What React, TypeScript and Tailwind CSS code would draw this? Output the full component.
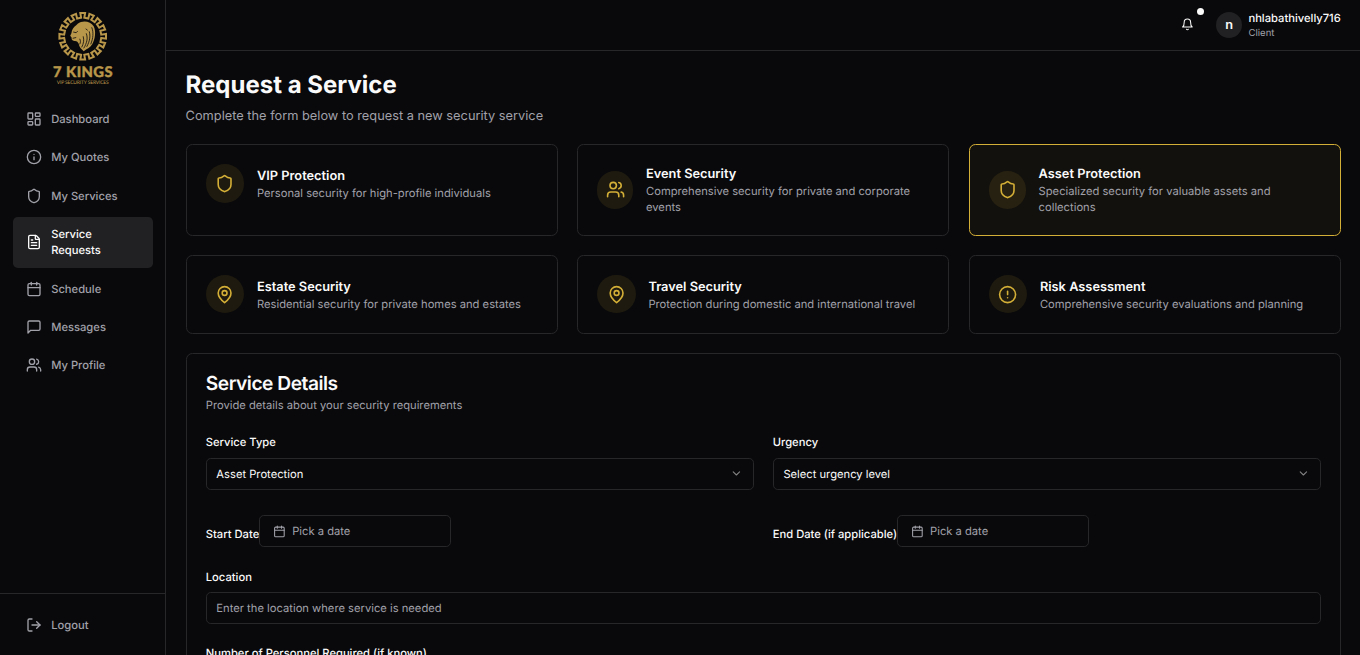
import type { ComponentType, ReactNode } from "react";
import {
  Calendar,
  ChevronDown,
  CircleAlert,
  FileText,
  Info,
  LayoutDashboard,
  LogOut,
  Shield,
  Users,
} from "lucide-react";

type IconProps = { className?: string };
type Icon = ComponentType<IconProps>;

function StrokeIcon({ className, children }: IconProps & { children: ReactNode }) {
  return (
    <svg
      viewBox="0 0 24 24"
      fill="none"
      stroke="currentColor"
      strokeWidth="2"
      strokeLinecap="round"
      strokeLinejoin="round"
      className={className}
    >
      {children}
    </svg>
  );
}

function Bell({ className }: IconProps) {
  return (
    <StrokeIcon className={className}>
      <path d="M6 8a6 6 0 0 1 12 0c0 7 3 9 3 9H3s3-2 3-9" />
      <path d="M10.300 21a1.940 1.940 0 0 0 3.400 0" />
    </StrokeIcon>
  );
}

function MessageSquare({ className }: IconProps) {
  return (
    <StrokeIcon className={className}>
      <path d="M21 15a2 2 0 0 1-2 2H7l-4 4V5a2 2 0 0 1 2-2h14a2 2 0 0 1 2 2z" />
    </StrokeIcon>
  );
}

function MapPin({ className }: IconProps) {
  return (
    <StrokeIcon className={className}>
      <path d="M20 10c0 6-8 12-8 12s-8-6-8-12a8 8 0 0 1 16 0Z" />
      <circle cx="12" cy="10" r="3" />
    </StrokeIcon>
  );
}

const navItems: { label: string; icon: Icon; active?: boolean }[] = [
  { label: "Dashboard", icon: LayoutDashboard },
  { label: "My Quotes", icon: Info },
  { label: "My Services", icon: Shield },
  { label: "Service Requests", icon: FileText, active: true },
  { label: "Schedule", icon: Calendar },
  { label: "Messages", icon: MessageSquare },
  { label: "My Profile", icon: Users },
];

const services: { title: string; text: string; icon: Icon; selected?: boolean }[] = [
  { title: "VIP Protection", text: "Personal security for high-profile individuals", icon: Shield },
  { title: "Event Security", text: "Comprehensive security for private and corporate events", icon: Users },
  { title: "Asset Protection", text: "Specialized security for valuable assets and collections", icon: Shield, selected: true },
  { title: "Estate Security", text: "Residential security for private homes and estates", icon: MapPin },
  { title: "Travel Security", text: "Protection during domestic and international travel", icon: MapPin },
  { title: "Risk Assessment", text: "Comprehensive security evaluations and planning", icon: CircleAlert },
];

// Closed battlement ring: each tooth steps between the inner and the outer radius.
function ringPath(teeth: number, inner: number, outer: number) {
  const step = (Math.PI * 2) / teeth;
  const point = (r: number, a: number) => `${(r * Math.sin(a)).toFixed(2)} ${(-r * Math.cos(a)).toFixed(2)}`;
  const parts: string[] = [];
  for (let i = 0; i < teeth; i++) {
    const a = i * step;
    parts.push(point(inner, a - step * 0.22), point(outer, a - step * 0.26), point(outer, a + step * 0.26), point(inner, a + step * 0.22));
  }
  return `M${parts.join(" L")} Z`;
}

function Logo() {
  return (
    <svg viewBox="0 0 74 84" className="h-[105px] w-[92.5px]" fill="#b8964a">
      <g transform="translate(36.7 30.3)">
        <path d={ringPath(16, 18.6, 23.4)} fill="none" stroke="#b8964a" strokeWidth="2" />
        <path d="M-5 -12.5 C0 -16.500 8 -15 11 -10 C13.500 -5 12.500 3 9.500 8 C7.500 11.500 4 12.500 1 15 C-1.500 12.500 -3.500 11 -4 7.500 C-5 5 -6.500 4.500 -8 4.600 C-10.500 4.800 -11.500 3 -11 1.500 L-12.500 -0.500 L-11.300 -3 C-11 -7 -8.500 -9.500 -6.500 -11 Z" />
        <path
          d="M-9.500 -4.300 L-6.500 -3.600 L-5 -5.200 M-10 2 L-6.500 1.200 M3 -7.500 L5 -6 M9 -9 C11 -4 10.500 2 8 8 M6.500 -5 C8 0 7 5 4 10.500 M3.500 -3 C5.500 2 4 7 1 12 M0.500 0 C1.500 4 1 7 -1 11 M-3 2.500 C-2 4.500 -2 6 -3 8"
          fill="none"
          stroke="#09090b"
          strokeWidth="0.8"
        />
      </g>
      <text
        x="36.800"
        y="71.300"
        textAnchor="middle"
        textLength="59.500"
        stroke="#b8964a"
        strokeWidth="0.4"
        className="font-[Lato,sans-serif] text-[14.7px] font-black"
      >
        7 KINGS
      </text>
      <text x="36.800" y="77.800" textAnchor="middle" textLength="52" className="font-[Lato,sans-serif] text-[5px]">
        VIP SECURITY SERVICES
      </text>
    </svg>
  );
}

function NavItem({ label, icon: Icon, active }: { label: string; icon: Icon; active?: boolean }) {
  return (
    <a
      className={
        active
          ? "flex items-center rounded-md bg-[#212123] px-4 py-3 text-sm font-medium text-[#fafafa]"
          : "flex items-center rounded-md px-4 py-3 text-sm font-medium text-[#a1a1aa]"
      }
    >
      <Icon className="mr-3 h-5 w-5 shrink-0" />
      <span>{label}</span>
    </a>
  );
}

function Sidebar() {
  return (
    <aside className="flex w-[208px] shrink-0 flex-col border-r border-[#27272a]">
      <div className="flex h-[110.85px] justify-center pt-[7.5px]">
        <Logo />
      </div>
      <nav className="flex flex-1 flex-col gap-1 p-4">
        {navItems.map((item) => (
          <NavItem key={item.label} {...item} />
        ))}
      </nav>
      <div className="border-t border-[#27272a] p-4">
        <NavItem label="Logout" icon={LogOut} />
      </div>
    </aside>
  );
}

function Header() {
  return (
    <header className="flex h-16 shrink-0 items-center justify-end border-b border-[#27272a] px-6">
      <div className="relative mr-4 mb-0.5 flex h-10 w-10 items-center justify-center">
        <Bell className="h-4 w-4" />
        <span className="absolute top-0 right-0 h-2 w-2 rounded-full bg-[#fafafa]" />
      </div>
      <div className="flex items-center gap-2">
        <div className="flex h-8 w-8 items-center justify-center rounded-full bg-[#212123] font-semibold">n</div>
        <div>
          <p className="mb-0.5 text-sm font-medium">nhlabathivelly716</p>
          <p className="text-xs text-[#a1a1aa]">Client</p>
        </div>
      </div>
    </header>
  );
}

function ServiceCard({ title, text, icon: Icon, selected }: (typeof services)[number]) {
  return (
    <div
      className={
        selected
          ? "rounded-lg border border-[#d4af37] bg-[#d4af37]/5"
          : "rounded-lg border border-[#27272a]"
      }
    >
      <div className="flex items-center gap-4 p-6">
        <div className="flex h-12 w-12 items-center justify-center rounded-full bg-[#d4af37]/10 text-[#d4af37]">
          <Icon className="h-6 w-6" />
        </div>
        <div>
          <h3 className="-mb-[1.4px] pt-[1.4px] font-semibold">{title}</h3>
          <p className="text-sm text-[#a1a1aa]">{text}</p>
        </div>
      </div>
    </div>
  );
}

function Label({ children, className = "" }: { children: ReactNode; className?: string }) {
  return <label className={`text-sm leading-none font-medium ${className}`}>{children}</label>;
}

function SelectField({ label, value }: { label: string; value: string }) {
  return (
    <div>
      <Label className="align-[-1.5px]">{label}</Label>
      <button className="mt-2 flex h-10 w-full items-center justify-between rounded-md border border-[#27272a] px-3 text-sm [text-rendering:geometricPrecision]">
        <span>{value}</span>
        <ChevronDown className="h-4 w-4 opacity-50" />
      </button>
    </div>
  );
}

function DateField({ label }: { label: string }) {
  return (
    <div>
      <Label>{label}</Label>
      <button className="mt-2 inline-flex h-10 w-[240px] items-center rounded-md border border-[#27272a] px-4 text-sm text-[#a1a1aa] [text-rendering:geometricPrecision]">
        <Calendar className="mr-2 h-4 w-4" />
        Pick a date
      </button>
    </div>
  );
}

function TextField({ label, labelClass, placeholder }: { label: string; labelClass: string; placeholder?: string }) {
  return (
    <div>
      <Label className={labelClass}>{label}</Label>
      <input
        placeholder={placeholder}
        className="mt-2 flex h-10 w-full rounded-md border border-[#27272a] px-3 text-sm [text-rendering:geometricPrecision] placeholder:text-[#a1a1aa]"
      />
    </div>
  );
}

export default function App() {
  return (
    <div className="flex h-[818.75px] w-[1700px] overflow-hidden bg-[#09090b] font-[Inter,sans-serif] text-base text-[#fafafa] [text-rendering:geometricPrecision] [zoom:0.8]">
      <Sidebar />
      <div className="flex min-w-0 flex-1 flex-col">
        <Header />
        <main className="min-h-0 flex-1 overflow-hidden p-6">
          <h1 className="pt-[1.25px] text-3xl font-bold">Request a Service</h1>
          <p className="mt-2 text-[#a1a1aa]">Complete the form below to request a new security service</p>
          <div className="mt-[22.87px] grid grid-cols-3 gap-6">
            {services.map((service) => (
              <ServiceCard key={service.title} {...service} />
            ))}
          </div>
          <section className="mt-[23.88px] rounded-lg border border-[#27272a]">
            <div className="flex flex-col gap-1.5 p-6">
              <h2 className="-mb-[1.25px] pt-[1.25px] text-2xl leading-none font-semibold tracking-tight">Service Details</h2>
              <p className="text-sm text-[#a1a1aa]">Provide details about your security requirements</p>
            </div>
            <div className="flex flex-col gap-6 p-6 pt-0">
              <div className="grid grid-cols-2 gap-6">
                <SelectField label="Service Type" value="Asset Protection" />
                <SelectField label="Urgency" value="Select urgency level" />
                <DateField label="Start Date" />
                <DateField label="End Date (if applicable)" />
              </div>
              <TextField
                label="Location"
                labelClass="align-[-2.25px]"
                placeholder="Enter the location where service is needed"
              />
              <TextField label="Number of Personnel Required (if known)" labelClass="align-[-1.5px]" />
            </div>
          </section>
        </main>
      </div>
    </div>
  );
}
